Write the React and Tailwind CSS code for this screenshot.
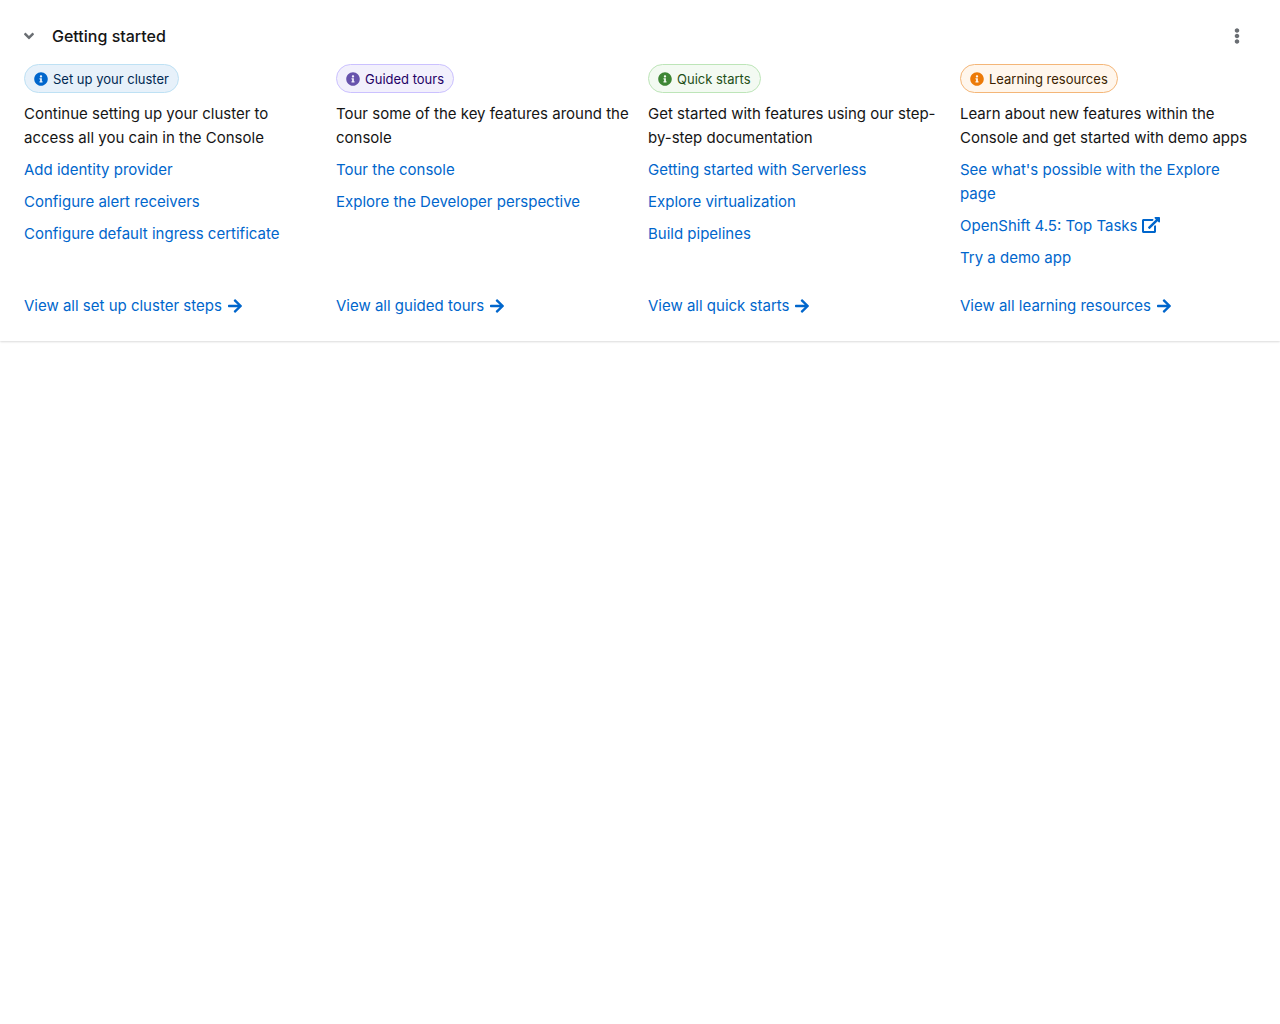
import { useState } from "react";
import { FaAngleDown, FaInfoCircle, FaArrowRight, FaEllipsisV } from "react-icons/fa";

const sections = [
  {
    title: "Set up your cluster",
    chip: "border-[#bee1f4] bg-[#e7f1fa] text-[#002952]",
    icon: "text-[#0066cc]",
    description: "Continue setting up your cluster to access all you cain in the Console",
    links: [
      { label: "Add identity provider" },
      { label: "Configure alert receivers" },
      { label: "Configure default ingress certificate" },
    ],
    more: "View all set up cluster steps",
  },
  {
    title: "Guided tours",
    chip: "border-[#cbc1ff] bg-[#f2f0fc] text-[#1f0066]",
    icon: "text-[#6753ac]",
    description: "Tour some of the key features around the console",
    links: [{ label: "Tour the console" }, { label: "Explore the Developer perspective" }],
    more: "View all guided tours",
  },
  {
    title: "Quick starts",
    chip: "border-[#bde5b8] bg-[#f3faf2] text-[#1e4f18]",
    icon: "text-[#3e8635]",
    description: "Get started with features using our step-by-step documentation",
    links: [
      { label: "Getting started with Serverless" },
      { label: "Explore virtualization" },
      { label: "Build pipelines" },
    ],
    more: "View all quick starts",
  },
  {
    title: "Learning resources",
    chip: "border-[#f4b678] bg-[#fff6ec] text-[#3b1f00]",
    icon: "text-[#ec7a08]",
    description: "Learn about new features within the Console and get started with demo apps",
    links: [
      { label: "See what's possible with the Explore page" },
      { label: "OpenShift 4.5: Top Tasks", external: true },
      { label: "Try a demo app" },
    ],
    more: "View all learning resources",
  },
];

function ExternalIcon() {
  return (
    <svg viewBox="0 0 576 512" fill="currentColor" aria-hidden="true" className="ml-1 inline-block h-4 w-[18px] align-[-2px]">
      <path d="M576 24v127.984c0 21.461-25.96 31.98-40.971 16.971l-35.707-35.709-243.523 243.523c-9.373 9.373-24.568 9.373-33.941 0l-22.627-22.627c-9.373-9.373-9.373-24.569 0-33.941L442.756 76.676l-35.703-35.705C391.982 25.9 402.656 0 424.024 0H552c13.255 0 24 10.745 24 24zM407.029 270.794l-16 16A23.999 23.999 0 0 0 384 303.765V448H64V128h264a24.003 24.003 0 0 0 16.97-7.029l16-16C376.089 89.851 365.381 64 344 64H48C21.49 64 0 85.49 0 112v352c0 26.51 21.49 48 48 48h352c26.51 0 48-21.49 48-48V287.764c0-21.382-25.852-32.09-40.971-16.97z" />
    </svg>
  );
}

function Section({ section }) {
  return (
    <section className="flex flex-col">
      <h3
        className={`mb-[9px] flex h-[29px] items-center gap-[5px] self-start rounded-full border px-[9px] text-[13px] ${section.chip}`}
      >
        <FaInfoCircle aria-hidden="true" className={`size-3.5 ${section.icon}`} />
        {section.title}
      </h3>
      <p>{section.description}</p>
      <ul className="mt-2 mb-6 flex grow flex-col gap-2">
        {section.links.map((link) => (
          <li key={link.label}>
            <a href="#" className="text-[#0066cc] hover:underline">
              {link.label}
              {link.external && <ExternalIcon />}
            </a>
          </li>
        ))}
      </ul>
      <a href="#" className="flex items-center gap-[5px] self-start text-[#0066cc] hover:underline">
        {section.more}
        <FaArrowRight aria-hidden="true" className="size-4" />
      </a>
    </section>
  );
}

export default function App() {
  const [open, setOpen] = useState(true);
  return (
    <main className="min-h-screen bg-white font-['Inter',sans-serif] text-[15px] leading-6 text-[#151515]">
      <div className="px-6 pt-6 pb-[23px] shadow-[0_1px_2px_0_rgba(3,3,3,0.12),0_0_2px_0_rgba(3,3,3,0.06)]">
        <header className="flex items-center justify-between">
          <h2 className="text-base font-medium">
            <button
              type="button"
              aria-expanded={open}
              onClick={() => setOpen(!open)}
              className="flex items-center gap-[15px]"
            >
              <FaAngleDown aria-hidden="true" className="-ml-[3px] size-4 text-[#6a6e73]" />
              Getting started
            </button>
          </h2>
          <button type="button" aria-label="Actions" className="px-[11px] text-[#6a6e73]">
            <FaEllipsisV aria-hidden="true" className="size-4" />
          </button>
        </header>
        {open && (
          <div className="mt-4 grid grid-cols-4 gap-4">
            {sections.map((section) => (
              <Section key={section.title} section={section} />
            ))}
          </div>
        )}
      </div>
    </main>
  );
}
